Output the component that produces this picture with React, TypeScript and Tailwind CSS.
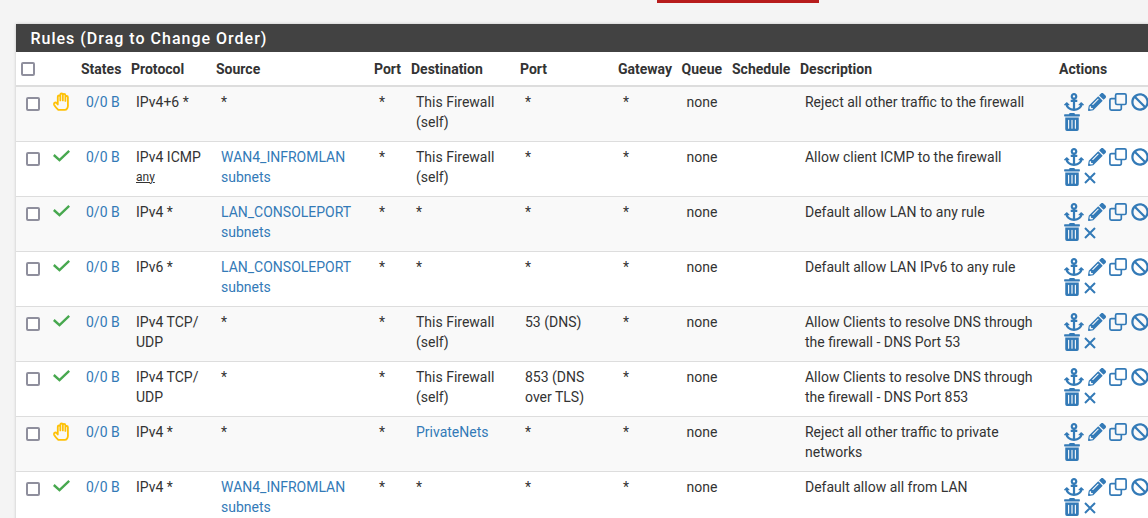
import React from "react";
import { FaAnchor, FaBan, FaPencilAlt, FaTrashAlt } from "react-icons/fa";

type Rule = {
  kind: "pass" | "reject";
  proto: string[];
  protoSub?: string;
  source: string[];
  sourceLink?: boolean;
  dest: string[];
  destLink?: boolean;
  port: string[];
  descr: string[];
  removable?: boolean;
};

const rules: Rule[] = [
  { kind: "reject", proto: ["IPv4+6 *"], source: ["*"], dest: ["This Firewall", "(self)"], port: ["*"], descr: ["Reject all other traffic to the firewall"] },
  { kind: "pass", proto: ["IPv4 ICMP"], protoSub: "any", source: ["WAN4_INFROMLAN", "subnets"], sourceLink: true, dest: ["This Firewall", "(self)"], port: ["*"], descr: ["Allow client ICMP to the firewall"], removable: true },
  { kind: "pass", proto: ["IPv4 *"], source: ["LAN_CONSOLEPORT", "subnets"], sourceLink: true, dest: ["*"], port: ["*"], descr: ["Default allow LAN to any rule"], removable: true },
  { kind: "pass", proto: ["IPv6 *"], source: ["LAN_CONSOLEPORT", "subnets"], sourceLink: true, dest: ["*"], port: ["*"], descr: ["Default allow LAN IPv6 to any rule"], removable: true },
  { kind: "pass", proto: ["IPv4 TCP/", "UDP"], source: ["*"], dest: ["This Firewall", "(self)"], port: ["53 (DNS)"], descr: ["Allow Clients to resolve DNS through", "the firewall - DNS Port 53"], removable: true },
  { kind: "pass", proto: ["IPv4 TCP/", "UDP"], source: ["*"], dest: ["This Firewall", "(self)"], port: ["853 (DNS", "over TLS)"], descr: ["Allow Clients to resolve DNS through", "the firewall - DNS Port 853"], removable: true },
  { kind: "reject", proto: ["IPv4 *"], source: ["*"], dest: ["PrivateNets"], destLink: true, port: ["*"], descr: ["Reject all other traffic to private", "networks"] },
  { kind: "pass", proto: ["IPv4 *"], source: ["WAN4_INFROMLAN", "subnets"], sourceLink: true, dest: ["*"], port: ["*"], descr: ["Default allow all from LAN"], removable: true },
];

const headers = ["States", "Protocol", "Source", "Port", "Destination", "Port", "Gateway", "Queue", "Schedule", "Description", "Actions"];

const Lines = ({ lines }: { lines: string[] }) => (
  <>
    {lines.map((l) => (
      <div key={l} className="whitespace-nowrap">{l}</div>
    ))}
  </>
);

const Box = () => (
  <span className="block w-[14px] h-[14px] rounded-[2px] border-2 border-[#8f8f9d] bg-white" />
);

const CheckIcon = () => (
  <svg viewBox="0 0 17 12" className="block w-[17px] h-[12px] mt-[3px]" fill="none" stroke="#47a84f" strokeWidth="2.4">
    <path d="M0.8 5 L6.5 10.2 L16.2 0.9" />
  </svg>
);

const HandIcon = () => (
  <svg viewBox="0 0 17 18" className="block w-[18px] h-[19px]" fill="none" stroke="#fec107" strokeWidth="1.7" strokeLinejoin="round">
    <path d="M5 17 C3.5 15.5 1 12.5 0.9 11.5 C0.8 10 2.5 9.5 3.5 10.5 L4.5 11.8 V4.5 a1.2 1.2 0 0 1 2.4 0 V8 V2.6 a1.2 1.2 0 0 1 2.4 0 V8 V3 a1.2 1.2 0 0 1 2.4 0 V8.5 V5 a1.2 1.2 0 0 1 2.4 0 V12 C14.4 15 13 17 11 17 Z" />
  </svg>
);

const CloneIcon = () => (
  <svg viewBox="0 0 18 18" className="w-[18px] h-[18px] mt-[1px] mr-[4px]" fill="none" stroke="currentColor" strokeWidth="1.7">
    <rect x="6.6" y="0.9" width="10.5" height="10.6" rx="1.4" />
    <path d="M6 5.6 H2.4 a1.5 1.5 0 0 0 -1.5 1.5 V15.6 a1.5 1.5 0 0 0 1.5 1.5 H10.8 a1.5 1.5 0 0 0 1.5 -1.5 V12" />
  </svg>
);

const RemoveIcon = () => (
  <svg viewBox="0 0 12 12" className="w-[12px] h-[12px] mt-[6px]" fill="none" stroke="currentColor" strokeWidth="2">
    <path d="M1 1 L11 11 M11 1 L1 11" />
  </svg>
);

const RuleRow = ({ rule, odd }: { rule: Rule; odd: boolean }) => {
  const td = "align-top pl-[5px] pt-[5px]";
  return (
    <tr className={`h-[55px] border-b border-[#ddd] ${odd ? "bg-[#f9f9f9]" : "bg-white"}`}>
      <td className="align-top pl-[10px] pt-[10px]"><Box /></td>
      <td className={td}>{rule.kind === "pass" ? <CheckIcon /> : <HandIcon />}</td>
      <td className={`${td} text-[#337ab7]`}>0/0 B</td>
      <td className={td}>
        <Lines lines={rule.proto} />
        {rule.protoSub && <div className="text-[12px] leading-[20px] underline">{rule.protoSub}</div>}
      </td>
      <td className={`${td} ${rule.sourceLink ? "text-[#337ab7]" : ""}`}><Lines lines={rule.source} /></td>
      <td className={td}>*</td>
      <td className={`${td} ${rule.destLink ? "text-[#337ab7]" : ""}`}><Lines lines={rule.dest} /></td>
      <td className={td}><Lines lines={rule.port} /></td>
      <td className={td}>*</td>
      <td className={td}>none</td>
      <td className={td}></td>
      <td className={td}><Lines lines={rule.descr} /></td>
      <td className={td}>
        <div className="flex flex-wrap w-[90px] text-[#337ab7]">
          <FaAnchor className="w-[20px] h-[18px] mt-[1px] mr-[4px]" />
          <FaPencilAlt className="w-[18px] h-[18px] mt-[1px] mr-[3px]" />
          <CloneIcon />
          <FaBan className="w-[18px] h-[18px] mt-[1px]" />
          <FaTrashAlt className="w-[16px] h-[18px] mt-[2px] mr-[4px]" />
          {rule.removable && <RemoveIcon />}
        </div>
      </td>
    </tr>
  );
};

export default function App() {
  return (
    <div className="w-[1148px] h-[518px] overflow-hidden bg-[#f4f4f4] text-[#333] text-[14px] leading-[20px] font-['Roboto',sans-serif]">
      <div className="ml-[657px] w-[162px] h-[3px] bg-[#b71c1c]" />
      <div className="ml-4 mt-[21px] w-[1140px] bg-white shadow-[0_0_3px_rgba(0,0,0,0.2)]">
        <h2 className="h-[28px] bg-[#424242] pl-[14.5px] text-white text-[16px] font-medium leading-[30px] tracking-[1px]">
          Rules (Drag to Change Order)
        </h2>
        <table className="table-fixed w-[1140px] border-collapse">
          <colgroup>
            {[32, 33, 50, 85, 158, 37, 109, 98, 63.6, 50.4, 68, 259, 97].map((w, i) => (
              <col key={i} style={{ width: w }} />
            ))}
          </colgroup>
          <thead>
            <tr className="h-[34px] border-b-2 border-[#ddd]">
              <th className="pl-[5px] align-top pt-[10px]"><Box /></th>
              <th></th>
              {headers.map((h, i) => (
                <th key={i} className="text-left font-bold align-top pt-[7px] whitespace-nowrap">{h}</th>
              ))}
            </tr>
          </thead>
          <tbody>
            {rules.map((r, i) => (
              <RuleRow key={i} rule={r} odd={i % 2 === 0} />
            ))}
          </tbody>
        </table>
      </div>
    </div>
  );
}
